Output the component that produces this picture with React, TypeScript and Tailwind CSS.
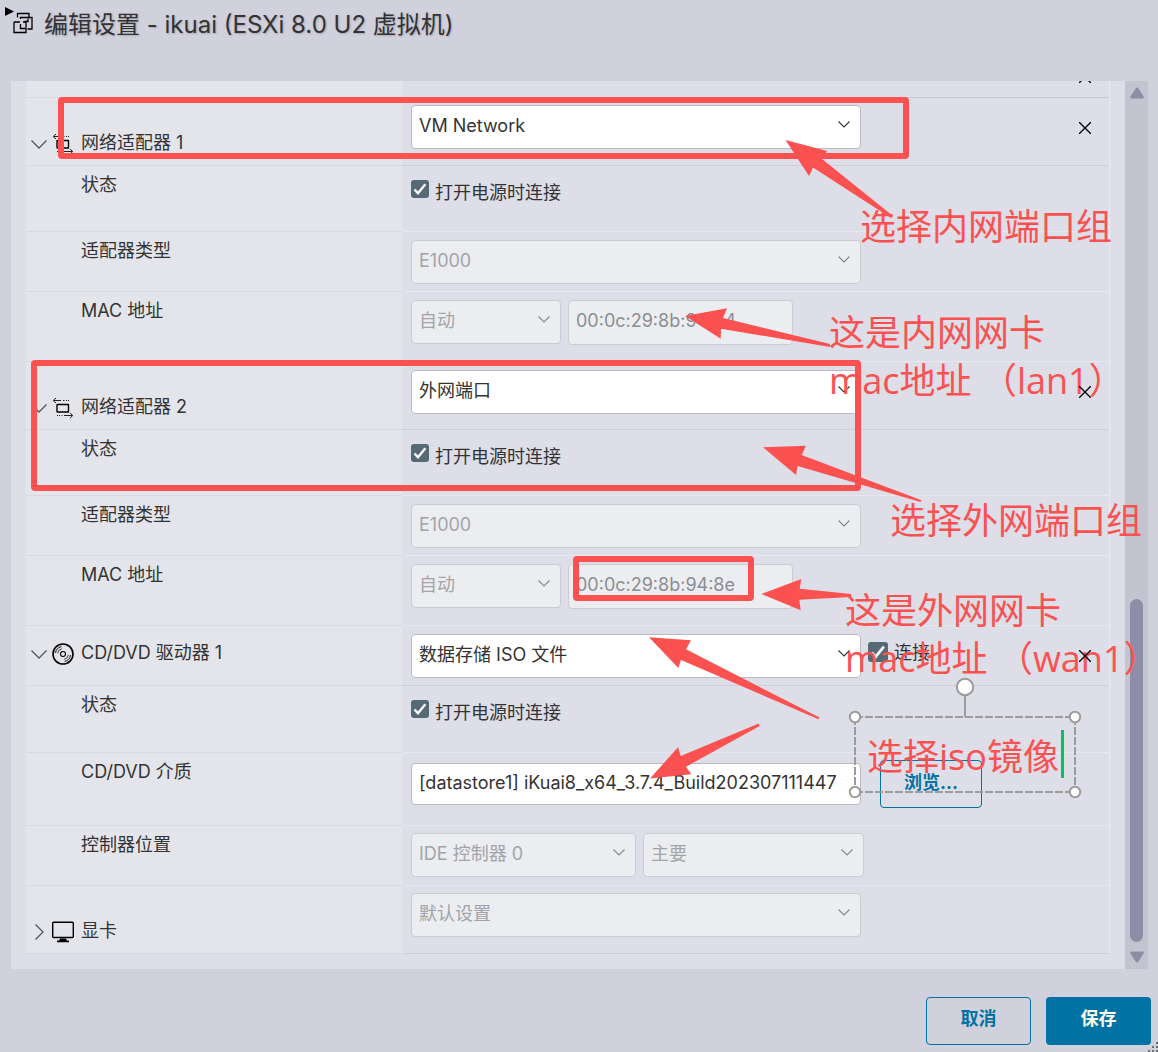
import type { ReactNode } from "react";

const sans = "font-['Inter','Noto_Sans_CJK_SC',sans-serif]";

function Caret({ className }: { className?: string }) {
  return (
    <svg viewBox="0 0 12 7" className={className} fill="none" stroke="currentColor" strokeWidth="1.1">
      <path d="M0.5 0.5 6 6 11.5 0.5" />
    </svg>
  );
}

function Expander({ open, label }: { open: boolean; label: string }) {
  return (
    <button type="button" aria-label={label} aria-expanded={open} className="flex h-[22px] w-5 items-center justify-center text-[#55575c]">
      {open ? (
        <svg viewBox="0 0 16 9" className="w-4" fill="none" stroke="currentColor" strokeWidth="1.3">
          <path d="M0.5 0.5 8 8 15.5 0.5" />
        </svg>
      ) : (
        <svg viewBox="0 0 9 16" className="h-4" fill="none" stroke="currentColor" strokeWidth="1.3">
          <path d="M0.5 0.5 8 8 0.5 15.5" />
        </svg>
      )}
    </button>
  );
}

function NetworkIcon() {
  return (
    <svg viewBox="0 0 22 22" className="h-[22px] w-[22px] text-[#222]" fill="none" stroke="currentColor">
      <path d="M1.5 3.5H9M11 3.5h1.5M14 3.5h1M16 3.5h1M4 1 1.2 3.5 4 6" />
      <rect x="5" y="7.5" width="11.5" height="7.5" rx="0.5" stroke="#000" strokeWidth="1.4" />
      <path d="M5 18.5h1M7 18.5h1M9.5 18.5h1M12 18.5h8.5M18 16l2.8 2.5L18 21" />
    </svg>
  );
}

function DiscIcon() {
  return (
    <svg viewBox="0 0 22 22" className="h-[22px] w-[22px]" fill="none" stroke="#000">
      <circle cx="11" cy="11" r="10" strokeWidth="1.6" />
      <circle cx="11" cy="11" r="2.5" strokeWidth="1.1" />
      <path d="M3.5 10A7.5 7.5 0 0 1 9.5 3.6M18.5 12a7.5 7.5 0 0 1-6 6.4" strokeWidth="0.9" />
      <path d="M5.6 10.3A5.4 5.4 0 0 1 9.8 5.7M16.4 11.7a5.4 5.4 0 0 1-4.2 4.6" strokeWidth="0.7" />
    </svg>
  );
}

function DisplayIcon() {
  return (
    <svg viewBox="0 0 22 22" className="h-[22px] w-[22px]" fill="none" stroke="#000">
      <rect x="0.7" y="1.2" width="20.6" height="15.3" rx="1" strokeWidth="1.4" />
      <path d="M8 17.5h6l.8 2H17v1.8H5v-1.8h2.2z" fill="#000" stroke="none" />
    </svg>
  );
}

function Field({
  id,
  label,
  height,
  start = "pt-2",
  line = "border-[#e7e7ef]",
  children,
}: {
  id: string;
  label: string;
  height: string;
  start?: string;
  line?: string;
  children: ReactNode;
}) {
  return (
    <div className={`flex ${height}`}>
      <div className="w-[376px] shrink-0 border-b border-[#d8d9df] bg-[#e4e5eb] pt-[7px] pl-[55px] leading-6">
        <label htmlFor={id}>{label}</label>
      </div>
      <div className={`flex flex-1 items-start border-b pl-[9px] ${start} ${line}`}>{children}</div>
    </div>
  );
}

function Section({
  id,
  label,
  icon,
  open = true,
  height,
  bottom = "pb-2.5",
  start = "pt-2",
  line = "border-[#cdced7]",
  removable = true,
  children,
}: {
  id: string;
  label: string;
  icon: ReactNode;
  open?: boolean;
  height: string;
  bottom?: string;
  start?: string;
  line?: string;
  removable?: boolean;
  children: ReactNode;
}) {
  return (
    <div className={`flex ${height}`}>
      <div className={`flex w-[376px] shrink-0 items-end border-b border-[#d8d9df] bg-[#e4e5eb] pl-[3px] leading-6 ${bottom}`}>
        <Expander open={open} label={label} />
        <span className="mr-[7px] ml-[3px]">{icon}</span>
        <label htmlFor={id}>{label}</label>
      </div>
      <div className={`flex flex-1 items-start border-b pl-[9px] ${start} ${line}`}>{children}</div>
      {removable && (
        <div className={`border-b pt-6 pr-[18px] ${line}`}>
          <RemoveButton label={`移除 ${label}`} />
        </div>
      )}
    </div>
  );
}

function RemoveButton({ label }: { label: string }) {
  return (
    <button type="button" aria-label={label} className="relative z-20 block h-3 w-3">
      <svg viewBox="0 0 12 12" className="h-3 w-3" stroke="#000" strokeWidth="1.3">
        <path d="M0 0 12 12M12 0 0 12" />
      </svg>
    </button>
  );
}

function Select({ id, width, value, disabled = false, label }: { id: string; width: string; value: string; disabled?: boolean; label?: string }) {
  return (
    <div className={`relative ${width}`}>
      <select
        id={id}
        aria-label={label}
        disabled={disabled}
        className="h-11 w-full appearance-none rounded border border-[#b9babf] bg-white pr-8 pb-1 pl-[7px] text-[#333] disabled:border-[#cbccd1] disabled:bg-[#ecedf1] disabled:text-[#a3a4a7] disabled:opacity-100"
      >
        <option>{value}</option>
      </select>
      <Caret className={`pointer-events-none absolute top-4 right-[11px] w-3 ${disabled ? "text-[#85878c]" : "text-[#333]"}`} />
    </div>
  );
}

function Check({ id, label, size = "h-[18px] w-[18px]", leading = "leading-[26px]" }: { id: string; label: string; size?: string; leading?: string }) {
  return (
    <div className="flex items-start gap-1.5">
      <span className="grid">
        <input id={id} type="checkbox" defaultChecked className={`col-start-1 row-start-1 appearance-none rounded-[3px] bg-[#566a76] ${size}`} />
        <svg viewBox="0 0 18 18" className={`pointer-events-none col-start-1 row-start-1 ${size}`} fill="none" stroke="#fff" strokeWidth="2.4">
          <path d="M3.5 9.5 7 13.2 14.3 4.2" />
        </svg>
      </span>
      <label htmlFor={id} className={leading}>{label}</label>
    </div>
  );
}

function MacInput({ id, value }: { id: string; value: string }) {
  return (
    <input
      id={id}
      disabled
      defaultValue={value}
      className="ml-[7px] h-[45px] w-[225px] rounded border border-[#cbccd1] bg-[#ecedf1] pb-1 pl-[7px] text-[#8b8d92]"
    />
  );
}

function Scrollbar() {
  return (
    <div aria-hidden="true" className="flex w-[23px] flex-col items-center bg-[#c3c4d0] py-[5px] text-[#8d8da6]">
      <svg viewBox="0 0 16 14" className="w-4" fill="currentColor">
        <path d="M6.6 2.4Q8 .6 9.4 2.4L14.6 10.4Q15.4 12.4 13.6 12.5H2.4Q.6 12.4 1.4 10.4Z" />
      </svg>
      <div className="mt-auto mb-2 h-[343px] w-[13px] rounded-full bg-[#8d8da6]" />
      <svg viewBox="0 0 16 14" className="w-4" fill="currentColor">
        <path d="M6.6 11.6Q8 13.4 9.4 11.6L14.6 3.6Q15.4 1.6 13.6 1.5H2.4Q.6 1.6 1.4 3.6Z" />
      </svg>
    </div>
  );
}

const noteText = "absolute font-['Open_Sans','Noto_Sans_CJK_SC',sans-serif] text-[36px] leading-[48px] font-normal whitespace-pre text-[#fb5151]";

function Annotations() {
  return (
    <div className="pointer-events-none absolute inset-0 z-10 overflow-hidden">
      <div className="absolute top-[97px] left-[58px] h-[62px] w-[851px] rounded-sm border-6 border-[#fb5151]" />
      <div className="absolute top-[360px] left-[31px] h-[131px] w-[830px] rounded-sm border-6 border-[#fb5151]" />
      <div className="absolute top-[556px] left-[573px] h-[45px] w-[181px] rounded-sm border-6 border-[#fb5151]" />

      <svg width="1158" height="1052" viewBox="0 0 1158 1052" className="absolute top-0 left-0 max-w-none" fill="#fb5151">
        <path d="M785.5 140 827 151 822 159 893 216 891 218 813 167.500 809 176Z" />
        <path d="M685 316 727 308.300 723 318 830 344 830 347 721 328.700 720.700 338.700Z" />
        <path d="M763 447.300 806 445.700 801.700 455 921.500 500.300 920.500 502 797.700 466 796 475Z" />
        <path d="M761.500 594 801.300 579 799.700 588.700 851 594 851 597 799.300 599.700 800.700 610.200Z" />
        <path d="M649 637.300 691 640.300 686 649.300 819.500 717.500 818.500 719.300 681 660 678.300 668Z" />
        <path d="M650 778.500 678 747.300 680.700 756 758.700 723.500 759.700 726 686 766.700 691.300 774.200Z" />
        <g fill="none" stroke="#9c9c9c" strokeWidth="2">
          <path d="M855 717H1075M855 792H1075" strokeDasharray="8 2" />
          <path d="M855 717V792M1075 717V792" strokeDasharray="8 2" />
          <path d="M965 695V717" />
          <circle cx="965" cy="687" r="8.200" fill="#fff" />
          <circle cx="855" cy="717" r="5.200" fill="#fff" />
          <circle cx="1075" cy="717" r="5.200" fill="#fff" />
          <circle cx="855" cy="792" r="5.200" fill="#fff" />
          <circle cx="1075" cy="792" r="5.200" fill="#fff" />
        </g>
      </svg>

      <p className={`${noteText} top-[203px] left-[860px]`}>选择内网端口组</p>
      <p className={`${noteText} top-[309px] left-[829px]`}>{"这是内网网卡\nmac地址 （lan1）"}</p>
      <p className={`${noteText} top-[497px] left-[890px]`}>选择外网端口组</p>
      <p className={`${noteText} top-[587px] left-[845px]`}>{"这是外网网卡\nmac地址 （wan1）"}</p>
      <p className={`${noteText} top-[733px] left-[867px]`}>选择iso镜像</p>
      <div className="absolute top-[730px] left-[1061px] h-12 w-[3px] bg-[#07c160]" />
    </div>
  );
}

export default function App() {
  return (
    <div className={`relative flex min-h-screen flex-col bg-[#d0d1dd] text-[18px] text-[#333] ${sans}`}>
      <header className="flex h-[81px] items-start pt-1 pl-1">
        <svg viewBox="0 0 32 32" className="h-8 w-8" fill="none" stroke="#000" strokeWidth="1.3">
          <path d="M1 3 10 7.500 1 12Z" fill="#000" stroke="none" />
          <path d="M13.500 13.500V9.500H25V13" />
          <path d="M16.500 15V13.500H28V25H23.500" />
          <path d="M10 18h6M19 18h3v10.500H10V18" />
          <path d="M16.500 20V24.500H21.500M24 14.500V17.500H20.500" />
        </svg>
        <h1 className="ml-2 text-[24px] leading-[42px] [text-shadow:1px_1px_2px_rgba(0,0,0,0.2)]">编辑设置 - ikuai (ESXi 8.0 U2 虚拟机)</h1>
      </header>

      <main className="mr-2.5 ml-[11px] flex bg-[#dddee8]">
        <form className="mr-[15px] mb-[15px] ml-[15px] flex-1 border-r border-[#e9e9f1]">
          <div className="flex h-[17px] overflow-hidden">
            <div className="w-[376px] shrink-0 border-b border-[#d8d9df] bg-[#e4e5eb]" />
            <div className="flex flex-1 items-start justify-end overflow-hidden border-b border-[#c6c7d1] pr-[18px]">
              <div className="-mt-2.5">
                <RemoveButton label="移除" />
              </div>
            </div>
          </div>

          <Section id="net1" label="网络适配器 1" icon={<NetworkIcon />} height="h-[68px]" start="pt-[7px]">
            <Select id="net1" width="w-[450px]" value="VM Network" />
          </Section>
          <Field id="net1-on" label="状态" height="h-[66px]" start="pt-3.5">
            <Check id="net1-on" label="打开电源时连接" />
          </Field>
          <Field id="net1-type" label="适配器类型" height="h-[60px]">
            <Select id="net1-type" width="w-[450px]" value="E1000" disabled />
          </Field>
          <Field id="net1-mac" label="MAC 地址" height="h-[70px]">
            <Select id="net1-mode" label="MAC 模式" width="w-[150px]" value="自动" disabled />
            <MacInput id="net1-mac" value="00:0c:29:8b:94:84" />
          </Field>

          <Section id="net2" label="网络适配器 2" icon={<NetworkIcon />} height="h-[68px]">
            <Select id="net2" width="w-[450px]" value="外网端口" />
          </Section>
          <Field id="net2-on" label="状态" height="h-[66px]" start="pt-3.5">
            <Check id="net2-on" label="打开电源时连接" />
          </Field>
          <Field id="net2-type" label="适配器类型" height="h-[60px]">
            <Select id="net2-type" width="w-[450px]" value="E1000" disabled />
          </Field>
          <Field id="net2-mac" label="MAC 地址" height="h-[70px]">
            <Select id="net2-mode" label="MAC 模式" width="w-[150px]" value="自动" disabled />
            <MacInput id="net2-mac" value="00:0c:29:8b:94:8e" />
          </Field>

          <Section id="cd" label="CD/DVD 驱动器 1" icon={<DiscIcon />} height="h-[60px]" bottom="pb-5">
            <Select id="cd" width="w-[450px]" value="数据存储 ISO 文件" />
            <div className="mt-2 ml-[7px]">
              <Check id="cd-connect" label="连接" size="h-5 w-5" leading="leading-[22px]" />
            </div>
          </Section>
          <Field id="cd-on" label="状态" height="h-[67px]" start="pt-3.5">
            <Check id="cd-on" label="打开电源时连接" />
          </Field>
          <Field id="cd-media" label="CD/DVD 介质" height="h-[73px]" start="pt-[7px]">
            <div className="flex items-center">
              <input
                id="cd-media"
                defaultValue="[datastore1] iKuai8_x64_3.7.4_Build202307111447"
                className="h-[42px] w-[450px] rounded border border-[#b9babf] bg-white pr-1 pb-1 pl-[7px]"
              />
              <button type="button" className="ml-[19px] h-12 w-[102px] rounded border border-[#0072a3] pb-1 font-bold text-[#0072a3]">
                浏览...
              </button>
            </div>
          </Field>
          <Field id="cd-bus" label="控制器位置" height="h-[60px]" start="pt-[7px]">
            <Select id="cd-bus" width="w-[225px]" value="IDE 控制器 0" disabled />
            <div className="ml-[7px]">
              <Select id="cd-slot" label="主从位置" width="w-[221px]" value="主要" disabled />
            </div>
          </Field>

          <Section id="gpu" label="显卡" icon={<DisplayIcon />} open={false} height="h-[68px]" start="pt-[7px]" removable={false}>
            <Select id="gpu" width="w-[450px]" value="默认设置" disabled />
          </Section>
        </form>
        <Scrollbar />
      </main>

      <footer className="flex items-start justify-end gap-[15px] pt-7 pr-[7px] pb-[7px]">
        <button type="button" className="h-12 w-[105px] rounded border border-[#0072a3] pb-1.5 font-bold text-[#0072a3]">取消</button>
        <button type="button" className="h-12 w-[105px] rounded bg-[#0072a3] pb-1.5 font-bold text-[#fdfbe8]">保存</button>
      </footer>

      <svg viewBox="0 0 10 10" className="absolute right-0 bottom-0 h-2.5 w-2.5" fill="#6b6c74">
        <path d="M8 0h2v2H8zM4 4h2v2H4zM8 4h2v2H8zM0 8h2v2H0zM4 8h2v2H4zM8 8h2v2H8z" />
      </svg>

      <Annotations />
    </div>
  );
}
